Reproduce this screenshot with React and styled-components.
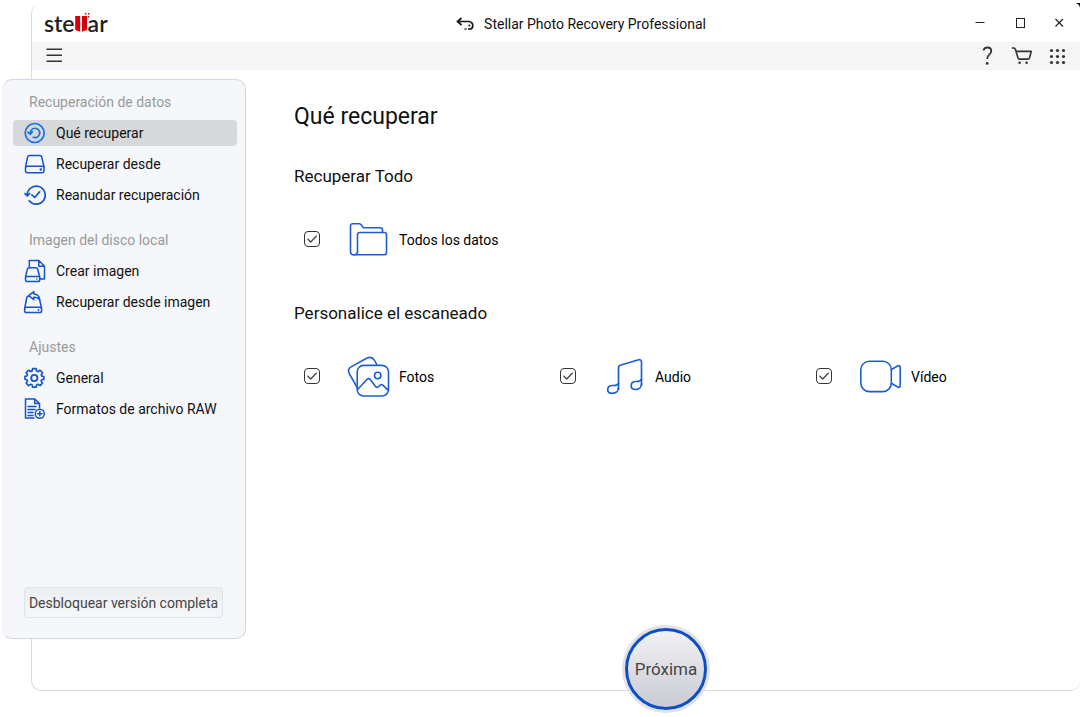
import React, { useState } from "react";
import styled, { createGlobalStyle } from "styled-components";

const GlobalStyle = createGlobalStyle`
  * {
    box-sizing: border-box;
  }

  body {
    margin: 0;
    background: #fff;
    color: #111;
    font-family: Roboto, "Liberation Sans", sans-serif;
    font-size: 14px;
  }

  button {
    font: inherit;
    color: inherit;
    background: none;
    border: none;
    padding: 0;
    cursor: pointer;
  }
`;

const Page = styled.div`
  min-height: 100vh;
  display: flex;
  padding: 3px 2px 26px 31px;
`;

const Window = styled.div`
  position: relative;
  flex: 1;
  display: flex;
  flex-direction: column;
  border: 1px solid #dcdcde;
  border-top: none;
  border-right: none;
  border-radius: 10px;

  &::after {
    content: "";
    position: absolute;
    top: 0;
    right: 0;
    width: 4px;
    height: 4px;
    background: radial-gradient(circle at 0 100%, #fff 3px, #000 4px);
  }
`;

const TitleBar = styled.header`
  display: grid;
  grid-template-columns: 1fr auto 1fr;
  align-items: center;
  height: 39px;
  padding: 0 12px;
`;

const Logo = styled.div`
  display: flex;
  align-items: baseline;
  color: #222;
  font-family: Lato, "Liberation Sans", sans-serif;
  font-size: 23px;
  font-weight: 600;
  line-height: 28px;

  svg {
    align-self: center;
  }
`;

const Title = styled.div`
  display: flex;
  align-items: center;
  gap: 9px;
  padding-left: 50px;
  padding-top: 3px;
  color: #111;
  line-height: 20px;
`;

const Controls = styled.div`
  display: flex;
  justify-content: flex-end;
  gap: ${props => props.$gap}px;
`;

const IconButton = styled.button`
  display: flex;
  align-items: center;
  justify-content: center;
  width: ${props => props.$size}px;
  height: ${props => props.$size}px;
`;

const Toolbar = styled.div`
  display: flex;
  justify-content: space-between;
  align-items: center;
  height: 28px;
  padding: 0 10px;
  background: #f6f6f6;
`;

const Body = styled.div`
  flex: 1;
  display: flex;
`;

const Sidebar = styled.nav`
  display: flex;
  flex-direction: column;
  width: 244px;
  flex-shrink: 0;
  margin: 9px 0 51px -30px;
  padding: 13px 8px 20px 10px;
  background: #f5f7fa;
  border: 1px solid #d0d6e2;
  border-left-color: #f0f2f6;
  border-radius: 10px;
  z-index: 1;
`;

const Group = styled.div`
  margin-bottom: 23px;
`;

const GroupTitle = styled.div`
  margin-bottom: 9px;
  padding-left: 16px;
  color: #999;
  line-height: 18px;
`;

const List = styled.ul`
  display: flex;
  flex-direction: column;
  gap: 5px;
  margin: 0;
  padding: 0;
  list-style: none;
`;

const NavItem = styled.button`
  display: flex;
  align-items: center;
  gap: 10px;
  width: 100%;
  height: 26px;
  padding-left: 11px;
  border-radius: 4px;
  background: ${props => (props.$active ? "#d7d8da" : "transparent")};
  line-height: 18px;
  text-align: left;

  svg {
    color: ${props => (props.$active ? "#1a73e8" : "#1553cc")};
  }
`;

const UnlockButton = styled.button`
  height: 31px;
  margin: auto 14px 0 11px;
  border: 1px solid #dfe1e4;
  border-radius: 4px;
  background: linear-gradient(#eceef0, #f6f7f9);
  color: #444;
  white-space: nowrap;
`;

const Main = styled.main`
  flex: 1;
  display: flex;
  flex-direction: column;
  padding-top: 33px;
`;

const Heading = styled.h1`
  margin: 0 0 35px 48px;
  font-size: 23px;
  font-weight: 400;
  line-height: 28px;
`;

const Section = styled.section`
  margin: 0 8px 41px 48px;
`;

const SectionTitle = styled.h2`
  margin: 0 0 32px;
  font-size: 17px;
  font-weight: 400;
  line-height: 20px;
`;

const Options = styled.div`
  display: grid;
  grid-template-columns: repeat(3, 1fr);
  padding-left: 10px;
`;

const Option = styled.label`
  display: flex;
  align-items: center;
  height: 44px;
  color: #000;
  cursor: pointer;
`;

const Check = styled.span`
  display: grid;
  margin: 0 27px 2px 0;

  input,
  svg {
    grid-area: 1 / 1;
    width: 16px;
    height: 16px;
    margin: 0;
  }

  input {
    appearance: none;
    border: 1px solid #333;
    border-radius: 4px;
  }

  svg {
    pointer-events: none;
    visibility: hidden;
  }

  input:checked + svg {
    visibility: visible;
  }
`;

const OptionIcon = styled.span`
  display: flex;
  margin-right: 8px;
  color: #1e5fd0;
`;

const Footer = styled.div`
  display: flex;
  justify-content: center;
  margin: auto 0 -23px;
  padding-left: 6px;
`;

const NextButton = styled.button`
  width: 82px;
  height: 82px;
  margin: 3px;
  border: 3px solid #0d4fc4;
  border-radius: 50%;
  background: linear-gradient(#f2f2f5, #c9cad3);
  box-shadow: 0 0 0 3px #e2e2e6;
  color: #444;
  font-size: 17px;
  z-index: 1;
`;

const Icon = ({ size = 22, stroke = 1.5, children }) => (
  <svg
    width={size}
    height={size}
    viewBox={`0 0 ${size} ${size}`}
    fill="none"
    stroke="currentColor"
    strokeWidth={stroke}
    strokeLinecap="round"
    strokeLinejoin="round"
    overflow="visible"
    aria-hidden="true"
  >
    {children}
  </svg>
);

const LogoMark = () => (
  <svg width="13" height="20" viewBox="0 0 13 20" fill="#d6000d" overflow="visible" aria-hidden="true">
    <path d="M.2 3h5v15.8L.2 17zM7 3h5v14l-5 1.8z" />
    <path d="M9.9 0h1.5v1.5H9.9zM13 0h1.5v1.5H13zM12.8 3h1.5v1.5h-1.5z" />
  </svg>
);

const BackIcon = () => (
  <svg width="19" height="14" viewBox="0 0 19 14" fill="none" stroke="#1a1a1a" strokeWidth="1.7" aria-hidden="true">
    <path d="M5.5 1L1.5 4.5l4 3.5M2 4.5h11a4 4 0 0 1 3.8 4.2c0 2-1.4 3.3-3.2 3.3H12" />
    <path d="M8.5 12h2" strokeWidth="1.4" />
    <circle cx="13.3" cy="8.5" r=".7" strokeWidth="1" />
  </svg>
);

const WhatIcon = () => (
  <Icon stroke={1.7}>
    <circle cx="10.7" cy="11" r="9.5" />
    <path d="M6.4 11.8A4.7 4.7 0 1 1 9.2 15.3M3.8 10.2L6.2 12.4l2.3-2.6" />
  </Icon>
);

const DriveIcon = () => (
  <Icon>
    <path d="M1.5 14L3.6 4.2a2 2 0 0 1 2-1.7h10.2a2 2 0 0 1 2 1.7L20 14" />
    <rect x="1.5" y="13.3" width="18.5" height="6.4" rx="2" />
    <circle cx="16.8" cy="16.5" r=".6" fill="currentColor" />
  </Icon>
);

const ResumeIcon = () => (
  <Icon stroke={1.7}>
    <path d="M3.2 11A9 9 0 1 1 5.2 16.8M1 9.6l2.3 2.3 2.4-2.4M7.9 10.8l2.8 2.7 4.9-5.6" />
  </Icon>
);

const CreateImageIcon = () => (
  <Icon>
    <path d="M5.3 7.5v-7h9.5l5.7 5.7V19h-4.3M14.8.7v5.5h5.5" />
    <path d="M1.5 17L3.3 9.3a2 2 0 0 1 2-1.6h6.4a2 2 0 0 1 2 1.6L15.7 17" />
    <rect x="1.5" y="16.5" width="14.3" height="5" rx="1.8" />
    <path d="M12.8 19v.1" />
  </Icon>
);

const RestoreImageIcon = () => (
  <Icon>
    <path d="M4.8 4.6L9.8.6v2.4c3.5.2 5.4 2 5.8 5.5-1.5-1.8-3.3-2.4-5.8-2.2v2.4z" />
    <path d="M.8 17L2.7 7a2.2 2.2 0 0 1 2-2M15.6 8.5L17.5 17" />
    <rect x=".6" y="16.3" width="17" height="5.2" rx="1.8" />
    <path d="M14.5 18.9v.1" strokeWidth="1.8" />
  </Icon>
);

const GearIcon = () => (
  <Icon stroke={1.8}>
    <path d="M8.6 1.5h3.8l.5 2.5 1.6.7 2.2-1.4L19.3 6l-1.4 2.1.6 1.5 2.1.4v3.1l-2.2.4-.6 1.5 1.4 2.2-2.6 2.6-2.2-1.4-1.5.7-.5 2.3H8.6l-.5-2.3-1.6-.7-2.2 1.4-2.6-2.6L3.1 15l-.7-1.5L.4 13V9.9l2.1-.4L3.1 8 1.7 5.9l2.6-2.6 2.2 1.4L8.1 4z" transform="translate(.6 .2) scale(.93)" />
    <circle cx="10.3" cy="11" r="3.1" />
  </Icon>
);

const RawIcon = () => (
  <Icon>
    <path d="M10 20H1.5V1h9.3l4.7 4.5V10M10.8 1v4.5h4.7M4 8.5h8M4 11.5h7M4 14.5h5M4 17.5h5" />
    <circle cx="15.8" cy="15.7" r="4.5" />
    <path d="M13.7 15.7h4.2M15.8 13.6v4.2" />
  </Icon>
);

const FolderIcon = () => (
  <Icon size={44} stroke={1.6}>
    <path d="M35.5 14.5V12a2.3 2.3 0 0 0-2.3-2.3H16.5L13.6 6.3a2 2 0 0 0-1.4-.6H5.5a2 2 0 0 0-2 2v26a3 3 0 0 0 3 3h1a3 3 0 0 0 3-3" />
    <path d="M10.5 33.7V16.7a2.2 2.2 0 0 1 2.2-2.2h24.6a2.2 2.2 0 0 1 2.2 2.2v17.8a2.2 2.2 0 0 1-2.2 2.2H6.5" />
  </Icon>
);

const PhotosIcon = () => (
  <Icon size={44} stroke={1.6}>
    <path d="M10.7 33.5L2.3 18.7c-1.5-3-.6-5.4 1.8-6.8L20 3c3-1.3 5.2-.7 6.8 1.4 1.3 1.8 2.4 3.4 3 5.6" />
    <rect x="10.2" y="10.4" width="31.3" height="30.6" rx="6.5" />
    <circle cx="30.7" cy="20.5" r="3.2" />
    <path d="M10.8 34.3l9.3-10.1q1.6-1.4 3.1.2l5.4 7.2q1.3 1.4 2.6.3l2.3-2q1.1-.9 2.3.2l5 4.8" />
  </Icon>
);

const AudioIcon = () => (
  <Icon size={44} stroke={1.7}>
    <path d="M15.5 34V12.5a2.4 2.4 0 0 1 1.8-2.3l18.3-5.4a2.2 2.2 0 0 1 2.9 2.1V30" />
    <path d="M15.5 28.5c-1.3 2.2-3.4 2-5.8 2-3 0-5 1.7-5 4.2 0 2.2 1.8 3.6 4.5 3.6 3.8 0 6.3-2.2 6.3-5.5" />
    <path d="M38.5 24.5c-1.3 2.2-3.2 2-5.5 2-3 0-4.8 1.7-4.8 4.2 0 2.2 1.8 3.8 4.3 3.8 3.7 0 6-2.4 6-5.7" />
  </Icon>
);

const VideoIcon = () => (
  <Icon size={44} stroke={1.6}>
    <rect x="1.8" y="6.3" width="30.5" height="30.3" rx="8.5" />
    <path d="M32.3 14.5l6.8-3.7q2.1-.7 2.1 1.4v18.6q0 2.1-2.1 1.4l-6.8-3.9" />
  </Icon>
);

const groups = [
  {
    title: "Recuperación de datos",
    items: [
      { label: "Qué recuperar", icon: WhatIcon },
      { label: "Recuperar desde", icon: DriveIcon },
      { label: "Reanudar recuperación", icon: ResumeIcon },
    ],
  },
  {
    title: "Imagen del disco local",
    items: [
      { label: "Crear imagen", icon: CreateImageIcon },
      { label: "Recuperar desde imagen", icon: RestoreImageIcon },
    ],
  },
  {
    title: "Ajustes",
    items: [
      { label: "General", icon: GearIcon },
      { label: "Formatos de archivo RAW", icon: RawIcon },
    ],
  },
];

const CheckOption = ({ label, icon: Picture }) => (
  <Option>
    <Check>
      <input type="checkbox" defaultChecked />
      <svg viewBox="0 0 16 16" fill="none" stroke="#444" strokeWidth="1.3" aria-hidden="true">
        <path d="M3.5 7.8l3.2 3.2 6-6.3" />
      </svg>
    </Check>
    <OptionIcon>
      <Picture />
    </OptionIcon>
    {label}
  </Option>
);

const App = () => {
  const [active, setActive] = useState("Qué recuperar");

  return (
    <>
      <GlobalStyle />
      <Page>
        <Window>
          <TitleBar>
            <Logo>
              ste
              <LogoMark />
              ar
            </Logo>
            <Title>
              <BackIcon />
              Stellar Photo Recovery Professional
            </Title>
            <Controls $gap={24}>
              <IconButton $size={16} aria-label="Minimizar">
                <svg width="16" height="16" stroke="#222">
                  <path d="M3.5 7.5h9" />
                </svg>
              </IconButton>
              <IconButton $size={16} aria-label="Maximizar">
                <svg width="16" height="16" fill="none" stroke="#222">
                  <rect x="4.5" y="3.5" width="8" height="9" />
                </svg>
              </IconButton>
              <IconButton $size={16} aria-label="Cerrar">
                <svg width="16" height="16" stroke="#222" strokeWidth="1.2">
                  <path d="M3.5 4l7.5 7.5M11 4l-7.5 7.5" />
                </svg>
              </IconButton>
            </Controls>
          </TitleBar>
          <Toolbar>
            <IconButton $size={24} aria-label="Menú">
              <svg width="24" height="24" stroke="#333" strokeWidth="1.4">
                <path d="M4.5 5.2h15.5M4.5 11.2h15.5M4.5 17.2h15.5" />
              </svg>
            </IconButton>
            <Controls $gap={11}>
              <IconButton $size={24} aria-label="Ayuda">
                <svg width="24" height="24" fill="none" stroke="#333" strokeWidth="1.8">
                  <path d="M7.4 6.4C8.2 4.3 9.6 3.5 11.4 3.5c2.4 0 3.9 1.4 3.9 3.6 0 1.8-.9 2.8-2.2 3.8-1.4 1.1-1.9 2-1.9 4.1" />
                  <circle cx="11.2" cy="19.4" r="1.4" fill="#333" stroke="none" />
                </svg>
              </IconButton>
              <IconButton $size={24} aria-label="Comprar">
                <svg width="24" height="24" fill="none" stroke="#333" strokeWidth="1.6" strokeLinejoin="round">
                  <path d="M.8 4h2.2c.7 0 1.1.4 1.3 1l2.8 9.2c.2.6.6.9 1.3.9h8.8c.6 0 1-.3 1.2-.9l1.9-6.8H5.1" />
                  <circle cx="8.6" cy="18.7" r="1.3" fill="#333" stroke="none" />
                  <circle cx="15.6" cy="18.7" r="1.3" fill="#333" stroke="none" />
                </svg>
              </IconButton>
              <IconButton $size={24} aria-label="Aplicaciones">
                <svg width="24" height="24" fill="#333">
                  {[6.5, 12.5, 18.5].map(y =>
                    [5.5, 11.5, 17.5].map(x => <circle key={`${x}-${y}`} cx={x} cy={y} r="1.6" />)
                  )}
                </svg>
              </IconButton>
            </Controls>
          </Toolbar>
          <Body>
            <Sidebar>
              {groups.map(group => (
                <Group key={group.title}>
                  <GroupTitle>{group.title}</GroupTitle>
                  <List>
                    {group.items.map(({ label, icon: ItemIcon }) => (
                      <li key={label}>
                        <NavItem $active={label === active} onClick={() => setActive(label)}>
                          <ItemIcon />
                          {label}
                        </NavItem>
                      </li>
                    ))}
                  </List>
                </Group>
              ))}
              <UnlockButton>Desbloquear versión completa</UnlockButton>
            </Sidebar>
            <Main>
              <Heading>Qué recuperar</Heading>
              <Section>
                <SectionTitle>Recuperar Todo</SectionTitle>
                <Options>
                  <CheckOption label="Todos los datos" icon={FolderIcon} />
                </Options>
              </Section>
              <Section>
                <SectionTitle>Personalice el escaneado</SectionTitle>
                <Options>
                  <CheckOption label="Fotos" icon={PhotosIcon} />
                  <CheckOption label="Audio" icon={AudioIcon} />
                  <CheckOption label="Vídeo" icon={VideoIcon} />
                </Options>
              </Section>
              <Footer>
                <NextButton>Próxima</NextButton>
              </Footer>
            </Main>
          </Body>
        </Window>
      </Page>
    </>
  );
};

export default App;
